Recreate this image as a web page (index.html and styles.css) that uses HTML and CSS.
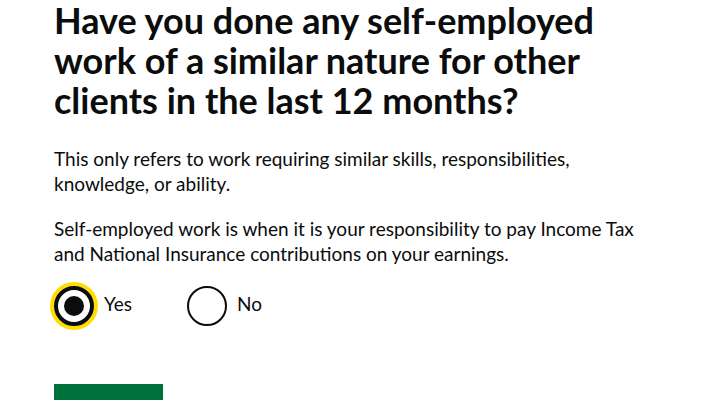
FILE: index.html
```html
<!DOCTYPE html>
<html lang="en">
<head>
<meta charset="utf-8">
<title>Self-employed work</title>
<link rel="stylesheet" href="styles.css">
</head>
<body>
<main class="page">
  <form class="form">
    <fieldset class="fieldset">
      <legend class="legend"><h1 class="heading">Have you done any self-employed work of a similar nature for other clients in the last 12 months?</h1></legend>
      <p class="body">This only refers to work requiring similar skills, responsibilities, knowledge, or ability.</p>
      <p class="body">Self-employed work is when it is your responsibility to pay Income Tax and National Insurance contributions on your earnings.</p>
      <div class="radios">
        <label class="radio">
          <span class="circle checked focus"><span class="dot"></span></span>
          <span class="radio-label">Yes</span>
        </label>
        <label class="radio">
          <span class="circle"></span>
          <span class="radio-label">No</span>
        </label>
      </div>
    </fieldset>
    <button type="button" class="button">Continue</button>
  </form>
</main>
</body>
</html>
```
FILE: styles.css
```css
html, body { margin: 0; padding: 0; background: #ffffff; }
body {
  font-family: Lato, "Liberation Sans", sans-serif;
  color: #0b0c0c;
}
.page { padding: 0 0 0 54px; }
.form { width: 586px; }
.fieldset { border: 0; margin: 0; padding: 0; min-width: 0; }
.legend { padding: 0; margin: -1px 0 0 0; width: 100%; }
.heading {
  margin: 0;
  font-size: 36px;
  line-height: 40px;
  font-weight: 700;
}
.body {
  margin: 0 0 20px 0;
  font-size: 19px;
  line-height: 25px;
}
.legend + .body { margin-top: 26px; }
.radios {
  display: flex;
  gap: 55px;
  margin-top: 5px;
}
.radio {
  display: flex;
  align-items: flex-start;
  gap: 10px;
}
.circle {
  box-sizing: border-box;
  width: 40px;
  height: 40px;
  border: 2px solid #0b0c0c;
  border-radius: 50%;
  display: flex;
  align-items: center;
  justify-content: center;
  flex: none;
}
.circle.focus {
  border-width: 4px;
  box-shadow: 0 0 0 4px #ffdd00;
}
.dot {
  width: 20px;
  height: 20px;
  border-radius: 50%;
  background: #0b0c0c;
}
.radio-label {
  font-size: 19px;
  line-height: 25px;
  margin-top: 5px;
}
.button {
  display: block;
  margin-top: 58px;
  width: 109px;
  height: 40px;
  border: 0;
  padding: 14px 0 0 0;
  background: #00703c;
  color: #ffffff;
  font-family: Lato, "Liberation Sans", sans-serif;
  font-size: 19px;
  line-height: 19px;
  box-shadow: 0 2px 0 #002d18;
}
```
